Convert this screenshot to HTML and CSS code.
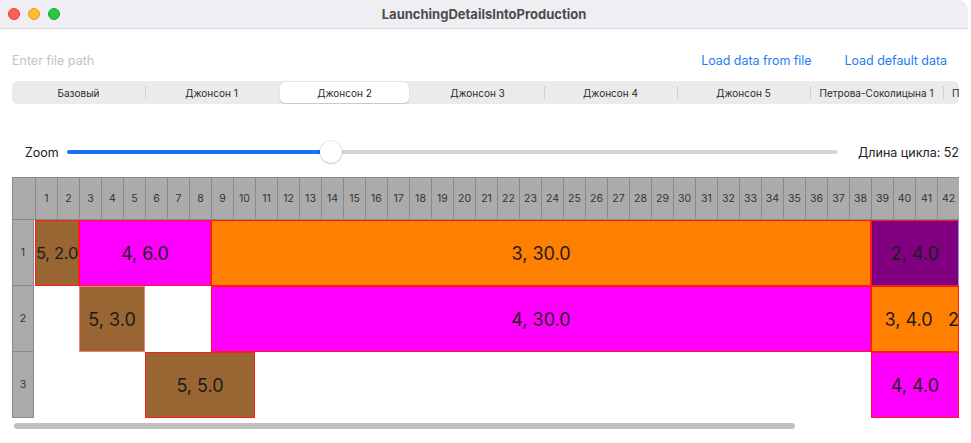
FILE: index.html
```html
<!DOCTYPE html>
<html lang="ru">
<head>
<meta charset="utf-8">
<title>LaunchingDetailsIntoProduction</title>
<link rel="stylesheet" href="styles.css">
</head>
<body>
<div class="window">
  <div class="titlebar">
    <div class="lights">
      <span class="light red"></span>
      <span class="light yellow"></span>
      <span class="light green"></span>
    </div>
    <div class="title">LaunchingDetailsIntoProduction</div>
  </div>
  <div class="content">
    <div class="toolbar">
      <span class="placeholder">Enter file path</span>
      <span class="link">Load data from file</span>
      <span class="link">Load default data</span>
    </div>
    <div class="segmented">
      <div class="seg">Базовый</div>
      <div class="seg">Джонсон 1</div>
      <div class="seg selected">Джонсон 2</div>
      <div class="seg">Джонсон 3</div>
      <div class="seg">Джонсон 4</div>
      <div class="seg">Джонсон 5</div>
      <div class="seg">Петрова-Соколицына 1</div>
      <div class="seg last">П</div>
    </div>
    <div class="zoomrow">
      <span class="zlabel">Zoom</span>
      <div class="slider">
        <div class="track"><div class="fill"></div></div>
        <div class="knob"></div>
      </div>
      <span class="cycle">Длина цикла: 52</span>
    </div>
    <div class="gridwrap">
      <div class="grid">
        <div class="corner"></div>
        <div class="hc">1</div><div class="hc">2</div><div class="hc">3</div><div class="hc">4</div><div class="hc">5</div><div class="hc">6</div><div class="hc">7</div><div class="hc">8</div><div class="hc">9</div><div class="hc">10</div>
        <div class="hc">11</div><div class="hc">12</div><div class="hc">13</div><div class="hc">14</div><div class="hc">15</div><div class="hc">16</div><div class="hc">17</div><div class="hc">18</div><div class="hc">19</div><div class="hc">20</div>
        <div class="hc">21</div><div class="hc">22</div><div class="hc">23</div><div class="hc">24</div><div class="hc">25</div><div class="hc">26</div><div class="hc">27</div><div class="hc">28</div><div class="hc">29</div><div class="hc">30</div>
        <div class="hc">31</div><div class="hc">32</div><div class="hc">33</div><div class="hc">34</div><div class="hc">35</div><div class="hc">36</div><div class="hc">37</div><div class="hc">38</div><div class="hc">39</div><div class="hc">40</div>
        <div class="hc">41</div><div class="hc">42</div>

        <div class="rh" style="grid-row: 2">1</div>
        <div class="rh" style="grid-row: 3">2</div>
        <div class="rh" style="grid-row: 4">3</div>

        <div class="blk brown narrow" style="grid-row: 2; grid-column: 2 / span 2">5, 2.0</div>
        <div class="blk magenta" style="grid-row: 2; grid-column: 4 / span 6">4, 6.0</div>
        <div class="blk orange" style="grid-row: 2; grid-column: 10 / span 30">3, 30.0</div>
        <div class="blk purple" style="grid-row: 2; grid-column: 40 / span 4">2, 4.0</div>

        <div class="blk brown soft" style="grid-row: 3; grid-column: 4 / span 3">5, 3.0</div>
        <div class="blk magenta" style="grid-row: 3; grid-column: 10 / span 30">4, 30.0</div>
        <div class="blk orange" style="grid-row: 3; grid-column: 40 / span 4"><span class="shift">3, 4.0</span><span class="spill">2</span></div>

        <div class="blk brown" style="grid-row: 4; grid-column: 7 / span 5">5, 5.0</div>
        <div class="blk magenta" style="grid-row: 4; grid-column: 40 / span 4">4, 4.0</div>
      </div>
    </div>
    <div class="scrollbar"><div class="thumb"></div></div>
  </div>
</div>
</body>
</html>
```

FILE: styles.css
```css
* { box-sizing: border-box; }

html, body {
  margin: 0;
  padding: 0;
  background: #ffffff;
}

body {
  font-family: "Inter", "Noto Sans", sans-serif;
  color: #222;
  overflow: hidden;
  width: 971px;
  height: 443px;
}

.window {
  width: 968px;
  height: 443px;
  background: #fff;
}

.titlebar {
  position: relative;
  height: 29px;
  background: #efeef2;
  border-bottom: 1px solid #d9d9dc;
  border-top-right-radius: 10px;
  display: flex;
  align-items: center;
  justify-content: center;
}

.lights {
  position: absolute;
  left: 8px;
  top: 8px;
  display: flex;
  gap: 8px;
}

.light {
  width: 12px;
  height: 12px;
  border-radius: 50%;
  display: block;
}
.light.red { background: #fe5f57; border: 0.5px solid #e0443e; }
.light.yellow { background: #febc2e; border: 0.5px solid #dea123; }
.light.green { background: #28c840; border: 0.5px solid #1aab29; }

.title {
  font-size: 13px;
  font-weight: 700;
  color: #4b4b4d;
}

.content {
  padding: 0 9px 0 12px;
}

.toolbar {
  margin-top: 21px;
  height: 20px;
  display: flex;
  align-items: center;
  padding-right: 12px;
  font-size: 12.5px;
}

.placeholder {
  color: #c2c2c4;
  flex: 1;
}

.link {
  color: #1f7cf4;
  margin-left: 33px;
  letter-spacing: -0.05px;
}

.segmented {
  margin-top: 11px;
  width: 947px;
  height: 23px;
  background: #ebebeb;
  border-radius: 6px;
  display: flex;
  align-items: center;
  overflow: hidden;
  font-size: 10px;
  color: #2b2b2b;
}

.seg {
  flex: 0 0 133px;
  height: 23px;
  display: flex;
  align-items: center;
  justify-content: center;
  position: relative;
  white-space: nowrap;
}

.seg + .seg::before {
  content: "";
  position: absolute;
  left: 0;
  top: 5px;
  height: 13px;
  width: 1px;
  background: #d2d2d2;
}

.seg.selected {
  background: #fff;
  border-radius: 5px;
  margin: 0 2px;
  flex-basis: 129px;
  height: 21px;
  box-shadow: 0 0.5px 1.5px rgba(0, 0, 0, 0.18);
}

.seg.selected::before,
.seg.selected + .seg::before { display: none; }

.seg.last {
  flex: 1 1 auto;
  justify-content: flex-start;
  padding-left: 9px;
}

.zoomrow {
  margin-top: 37px;
  height: 22px;
  display: flex;
  align-items: center;
  font-size: 12.5px;
}

.zlabel {
  margin-left: 13px;
  width: 42px;
  color: #222;
}

.slider {
  position: relative;
  flex: 1;
  height: 22px;
  display: flex;
  align-items: center;
}

.track {
  width: 100%;
  height: 4px;
  background: #d6d6d6;
  border-radius: 2px;
  overflow: hidden;
}

.fill {
  width: 263px;
  height: 100%;
  background: #1772f5;
}

.knob {
  position: absolute;
  left: 253px;
  top: 0;
  width: 22px;
  height: 22px;
  border-radius: 50%;
  background: #fff;
  box-shadow: 0 0.5px 2px rgba(0, 0, 0, 0.3), 0 0 0 0.5px rgba(0, 0, 0, 0.06);
}

.cycle {
  margin-left: 20px;
  white-space: nowrap;
  color: #222;
}

.gridwrap {
  margin-top: 14px;
  width: 947px;
  height: 241px;
  overflow: hidden;
}

.grid {
  display: grid;
  grid-template-columns: 23px repeat(42, 22px);
  grid-template-rows: 43px 66px 66px 66px;
  width: max-content;
}

.corner {
  grid-row: 1;
  grid-column: 1;
  background: #ababab;
  border: 1px solid #8a8a8a;
  border-right: none;
}

.hc {
  grid-row: 1;
  background: #ababab;
  border-top: 1px solid #8a8a8a;
  border-bottom: 1px solid #8a8a8a;
  border-left: 1px solid #8a8a8a;
  display: flex;
  align-items: center;
  justify-content: center;
  font-size: 10.5px;
  color: #333;
}

.hc:last-child { border-right: 1px solid #8a8a8a; }

.rh {
  grid-column: 1;
  background: #ababab;
  border: 1px solid #8a8a8a;
  margin-right: 1px;
  margin-top: -1px;
  display: flex;
  align-items: center;
  justify-content: center;
  font-size: 10.5px;
  color: #333;
}

.blk {
  border: 1px solid #ff1a1a;
  display: flex;
  align-items: center;
  justify-content: center;
  font-size: 18px;
  color: #1c1c1c;
  white-space: nowrap;
  overflow: hidden;
  position: relative;
}

.blk.narrow {
  font-size: 16.5px;
  letter-spacing: -0.3px;
  padding: 0;
}

.brown { background: #996633; }
.brown.soft { border-color: #f08080; }
.magenta { background: #ff00ff; }
.orange { background: #ff8000; }
.purple { background: #800080; border-right-color: #9a8ad8; }

.shift { margin-right: 13px; }

.spill {
  position: absolute;
  left: 76px;
  top: 50%;
  transform: translateY(-50%);
}

.scrollbar {
  margin-top: 5px;
  height: 6px;
  padding-left: 2px;
}

.thumb {
  width: 781px;
  height: 6px;
  border-radius: 3px;
  background: #c1c1c1;
}
```
